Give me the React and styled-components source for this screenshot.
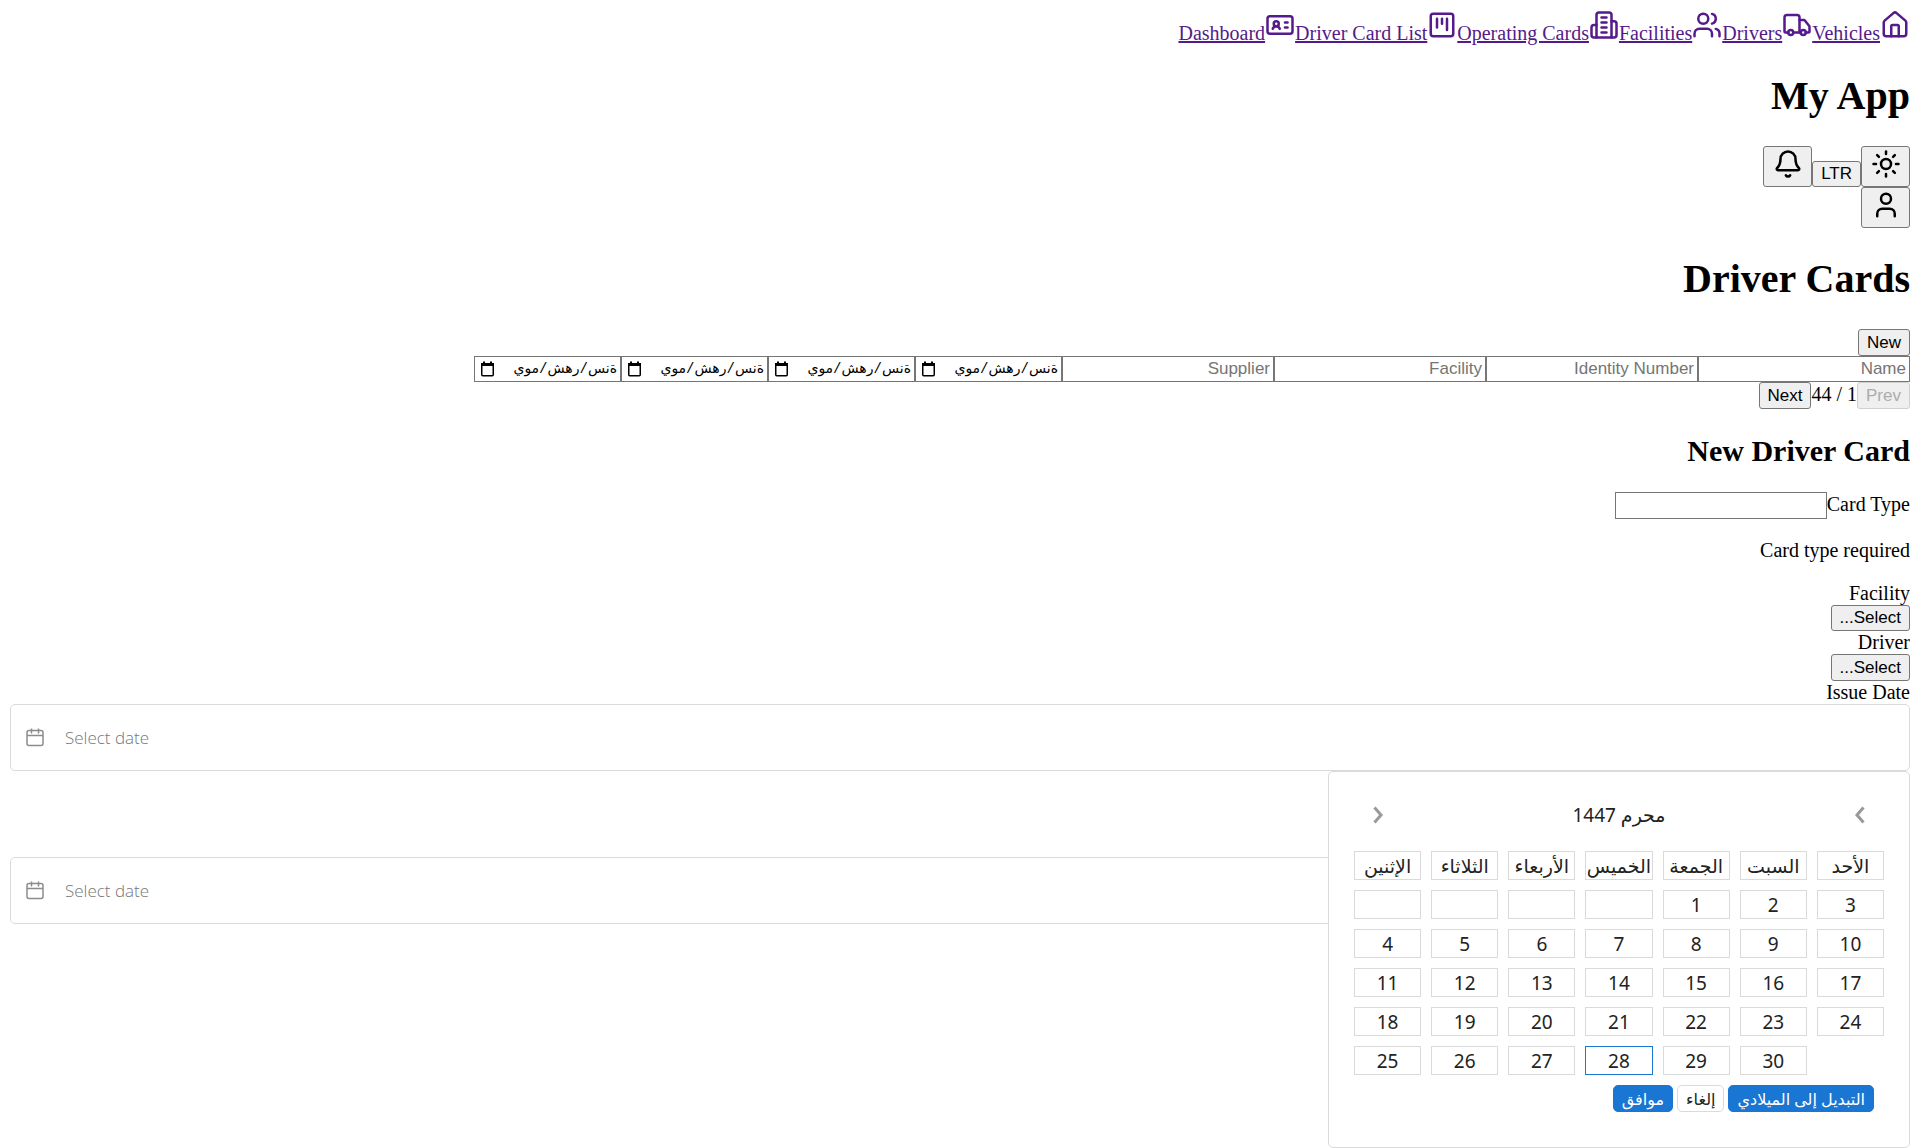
import React from "react";
import styled, { createGlobalStyle } from "styled-components";
import { Bell, House, IdCard, SquareKanban, Sun, Truck, User, Users } from "lucide-react";

const GlobalStyle = createGlobalStyle`
  body {
    margin: 10px 10px 0;
    background: #fff;
    color: #000;
    font-family: "Liberation Serif", "Times New Roman", "DejaVu Sans", serif;
    font-size: 20px;
  }
`;

const controlFont = `"Liberation Sans", Arial, "DejaVu Sans", sans-serif`;
const pickerFont = `"Noto Sans", "Open Sans", "DejaVu Sans", sans-serif`;
const line = "#dadada";

const Nav = styled.nav`
  min-height: 36px;
`;

const TopBar = styled.header`
  padding-bottom: 1px;
`;

const Title = styled.h1`
  margin: 27px 0;
  font-size: 40px;
  line-height: 46px;
`;

const FormTitle = styled.h2`
  margin: 25px 0 24px;
  font-size: 30px;
  line-height: 34px;
`;

const NavLink = styled.a`
  color: #551a8b;
`;

const Button = styled.button`
  margin: 0;
  padding: 1px 8px;
  border: 1px solid #767676;
  border-radius: 3px;
  background: #efefef;
  color: #000;
  font: 17px ${controlFont};
  line-height: ${(p) => (p.$compact ? 22 : 23)}px;

  &:disabled {
    border-color: #d0d0d0;
    color: #acacac;
  }
`;

const IconButton = styled(Button)`
  box-sizing: border-box;
  width: 49px;
  padding-top: 2px;
`;

const Filters = styled.div`
  display: flex;
`;

const TextBox = styled.input`
  box-sizing: border-box;
  width: 212px;
  height: ${(p) => (p.$tall ? 27 : 26)}px;
  margin: 0;
  padding: 1px 3px;
  border: 1px solid #767676;
  border-radius: 0;
  background: #fff;
  color: #000;
  font: 17px/20px ${controlFont};

  &::placeholder {
    color: #757575;
    opacity: 1;
  }
`;

const DateBox = styled.label`
  display: flex;
  align-items: center;
  box-sizing: border-box;
  width: 147px;
  height: 26px;
  padding: 0 3px 0 6px;
  border: 1px solid #767676;
`;

const DateInput = styled.input`
  flex: 1;
  min-width: 0;
  padding: 0;
  border: 0;
  outline: 0;
  background: transparent;
  font: 14px/20px "Liberation Mono", "DejaVu Sans", monospace;

  &::placeholder {
    color: #000;
    opacity: 1;
  }
`;

const FieldLabel = styled.label`
  display: ${(p) => (p.$block ? "block" : "inline")};
`;

const Message = styled.p`
  margin: 20px 0;
`;

const Pickers = styled.div`
  display: grid;
  grid-template-columns: 1fr;
  grid-template-rows: 67px 86px 67px auto;
`;

const Picker = styled.label`
  grid-column: 1;
  grid-row: ${(p) => p.$row};
  display: flex;
  align-items: center;
  gap: 20px;
  direction: ltr;
  padding: 0 14px;
  border: 1px solid ${line};
  border-radius: 5px;
`;

const PickerInput = styled.input`
  flex: 1;
  padding: 0;
  border: 0;
  outline: 0;
  background: transparent;
  font: 300 17px/24px "Open Sans", "Noto Sans", sans-serif;

  &::placeholder {
    color: #777;
    opacity: 1;
  }
`;

const Popup = styled.section`
  grid-column: 1;
  grid-row: 2 / 5;
  justify-self: start;
  z-index: 1;
  box-sizing: border-box;
  width: 582px;
  padding: 26px 15px 35px;
  border: 1px solid ${line};
  border-radius: 5px;
  background: #fff;
  color: #222;
  font: 19px/28px ${pickerFont};
`;

const PopupHead = styled.header`
  display: flex;
  align-items: center;
  justify-content: space-between;
  height: 34px;
  padding: 0 22px;
`;

const Arrow = styled.button`
  display: grid;
  place-items: center;
  width: 24px;
  height: 32px;
  padding: 0;
  border: 0;
  background: none;
`;

const Days = styled.table`
  width: 100%;
  margin-top: 9px;
  border-spacing: 10px;
  table-layout: fixed;
  direction: ltr;
`;

const WeekDay = styled.th`
  box-sizing: border-box;
  height: 29px;
  padding: 2px 0 0;
  border: 1px solid ${line};
  font-weight: 400;
  line-height: 25px;
  white-space: nowrap;
`;

const DayCell = styled.td`
  box-sizing: border-box;
  height: 29px;
  padding: 0;
  border: 1px solid ${(p) => (p.$today ? "#1976d2" : line)};
`;

const DayButton = styled.button`
  display: block;
  width: 100%;
  height: 27px;
  padding: 2px 0 0;
  border: 0;
  background: none;
  color: inherit;
  font: inherit;
  line-height: 25px;
`;

const PopupActions = styled.footer`
  display: flex;
  gap: 4px;
  padding: 0 20px;
`;

const Action = styled.button`
  box-sizing: border-box;
  height: 27px;
  padding: 0 8px;
  border: 1px solid ${(p) => (p.$primary ? "#1976d2" : line)};
  border-radius: 5px;
  background: ${(p) => (p.$primary ? "#1976d2" : "#fff")};
  color: ${(p) => (p.$primary ? "#fff" : "#222")};
  font: 16px/24px ${pickerFont};
`;

function Building({ size }) {
  return (
    <svg
      width={size}
      height={size}
      viewBox="0 0 24 24"
      fill="none"
      stroke="currentColor"
      strokeWidth="2"
      strokeLinecap="round"
      strokeLinejoin="round"
      aria-hidden="true"
    >
      <path d="M6 22V4a2 2 0 0 1 2-2h8a2 2 0 0 1 2 2v18Z" />
      <path d="M6 12H4a2 2 0 0 0-2 2v6a2 2 0 0 0 2 2h2" />
      <path d="M18 9h2a2 2 0 0 1 2 2v9a2 2 0 0 1-2 2h-2" />
      <path d="M10 6h4M10 10h4M10 14h4M10 18h4" />
    </svg>
  );
}

const links = [
  [House, "Dashboard"],
  [IdCard, "Driver Card List"],
  [SquareKanban, "Operating Cards"],
  [Building, "Facilities"],
  [Users, "Drivers"],
  [Truck, "Vehicles"],
];

const textFilters = ["Name", "Identity Number", "Facility", "Supplier"];
const dateFilters = ["issue-from", "issue-to", "expiry-from", "expiry-to"];

const weekDays = ["الإثنين", "الثلاثاء", "الأربعاء", "الخميس", "الجمعة", "السبت", "الأحد"];
const weeks = [
  ["", "", "", "", 1, 2, 3],
  [4, 5, 6, 7, 8, 9, 10],
  [11, 12, 13, 14, 15, 16, 17],
  [18, 19, 20, 21, 22, 23, 24],
  [25, 26, 27, 28, 29, 30],
];
const today = 28;

function DateGlyph() {
  return (
    <svg width="13" height="16" viewBox="0 0 13 16" aria-hidden="true">
      <path d="M3 0.5v2M10 0.5v2" stroke="#000" strokeWidth="2" />
      <rect x="0.75" y="2.75" width="11.5" height="12" rx="1" fill="none" stroke="#000" strokeWidth="1.5" />
      <path d="M0 2h13v3H0z" />
    </svg>
  );
}

function CalendarGlyph() {
  return (
    <svg width="20" height="20" viewBox="0 0 20 20" fill="none" stroke="#8c8c8c" strokeWidth="1.5" aria-hidden="true">
      <rect x="2" y="2.5" width="16" height="15" rx="2" />
      <path d="M2 7.5h16M6.5 0.5v5M13.5 0.5v5" />
    </svg>
  );
}

function Chevron({ d }) {
  return (
    <svg width="10" height="18" viewBox="0 0 10 18" fill="none" stroke="#999" strokeWidth="3" aria-hidden="true">
      <path d={d} />
    </svg>
  );
}

function DatePicker({ name, id, row }) {
  return (
    <Picker $row={row}>
      <CalendarGlyph />
      <PickerInput id={id} aria-label={name} placeholder="Select date" />
    </Picker>
  );
}

function HijriCalendar() {
  return (
    <Popup>
      <PopupHead>
        <Arrow type="button" aria-label="السابق">
          <Chevron d="M8.5 1.5 2 9l6.5 7.5" />
        </Arrow>
        <span>محرم 1447</span>
        <Arrow type="button" aria-label="التالي">
          <Chevron d="M1.5 1.5 8 9l-6.5 7.5" />
        </Arrow>
      </PopupHead>
      <Days>
        <thead>
          <tr>
            {weekDays.map((day) => (
              <WeekDay key={day} scope="col">{day}</WeekDay>
            ))}
          </tr>
        </thead>
        <tbody>
          {weeks.map((week, w) => (
            <tr key={w}>
              {week.map((day, d) => (
                <DayCell key={d} $today={day === today}>
                  {day && <DayButton type="button">{day}</DayButton>}
                </DayCell>
              ))}
            </tr>
          ))}
        </tbody>
      </Days>
      <PopupActions>
        <Action type="button" $primary>التبديل إلى الميلادي</Action>
        <Action type="button">إلغاء</Action>
        <Action type="button" $primary>موافق</Action>
      </PopupActions>
    </Popup>
  );
}

export default function App() {
  return (
    <div dir="rtl">
      <GlobalStyle />
      <Nav>
        {links.map(([Icon, label]) => (
          <NavLink key={label} href="#">
            <Icon size={30} />
            {label}
          </NavLink>
        ))}
      </Nav>
      <TopBar>
        <Title>My App</Title>
        <IconButton type="button" aria-label="Theme"><Sun size={30} /></IconButton>
        <Button type="button" $compact>LTR</Button>
        <IconButton type="button" aria-label="Notifications"><Bell size={30} /></IconButton>
        <div>
          <IconButton type="button" aria-label="Account"><User size={30} /></IconButton>
        </div>
      </TopBar>
      <main>
        <Title>Driver Cards</Title>
        <Button type="button">New</Button>
        <Filters>
          {textFilters.map((name) => (
            <TextBox key={name} placeholder={name} aria-label={name} />
          ))}
          {dateFilters.map((name) => (
            <DateBox key={name}>
              <DateInput aria-label={name} placeholder="ةنس/رهش/موي" />
              <DateGlyph />
            </DateBox>
          ))}
        </Filters>
        <div>
          <Button type="button" disabled>Prev</Button>
          <span>1 / 44</span>
          <Button type="button">Next</Button>
        </div>
        <form>
          <FormTitle>New Driver Card</FormTitle>
          <FieldLabel htmlFor="card-type">Card Type</FieldLabel>
          <TextBox id="card-type" $tall />
          <Message>Card type required</Message>
          <FieldLabel $block htmlFor="facility">Facility</FieldLabel>
          <Button type="button" id="facility" $compact>Select...</Button>
          <FieldLabel $block htmlFor="driver">Driver</FieldLabel>
          <Button type="button" id="driver">Select...</Button>
          <FieldLabel $block htmlFor="issue-date">Issue Date</FieldLabel>
          <Pickers>
            <DatePicker id="issue-date" name="Issue Date" row={1} />
            <DatePicker id="expiry-date" name="Expiry Date" row={3} />
            <HijriCalendar />
          </Pickers>
        </form>
      </main>
    </div>
  );
}
